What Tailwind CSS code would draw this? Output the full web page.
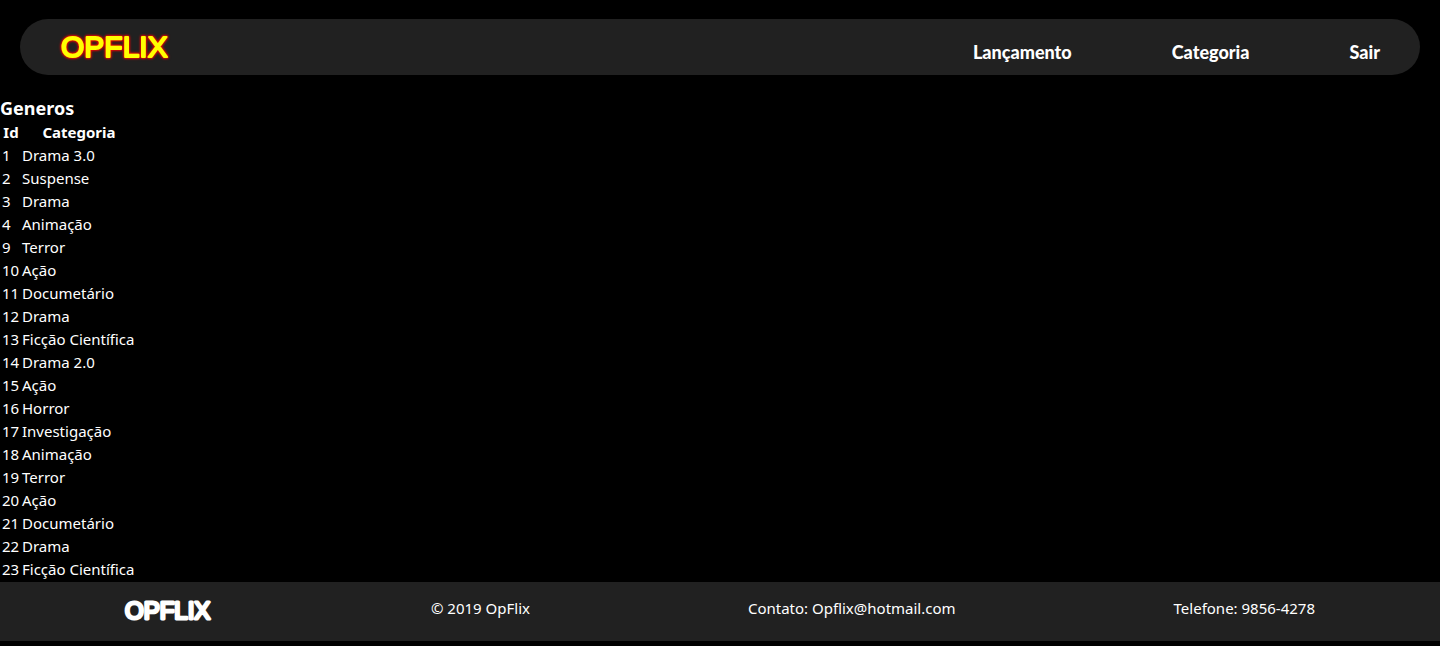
<!DOCTYPE html>
<html lang="pt-BR">
<head>
<meta charset="utf-8">
<meta name="viewport" content="width=device-width, initial-scale=1">
<title>OpFlix</title>
<script src="https://cdn.jsdelivr.net/npm/@tailwindcss/browser@4"></script>
</head>
<body class="bg-black text-white font-['Noto_Sans',sans-serif] text-[15px] leading-[21px]">
<header class="mx-5 mt-[19px] flex h-14 items-center justify-between rounded-full bg-[#212121] px-10">
  <a href="#" aria-label="OPFLIX">
    <svg class="h-8 w-[112px] overflow-visible [filter:drop-shadow(0_0_1px_#ff0000)_drop-shadow(0_0_1px_#ff0000)]" viewBox="0 0 112 32">
      <text x="1" y="26" font-family="Liberation Sans, sans-serif" font-size="30" fill="#ffff00" stroke="#ffff00" stroke-width="2" stroke-linejoin="round">OPFLIX</text>
    </svg>
  </a>
  <nav class="flex gap-[100px] pt-2.5 font-['Lato',sans-serif] text-lg leading-[21px] font-black">
    <a href="#">Lançamento</a>
    <a href="#">Categoria</a>
    <a href="#">Sair</a>
  </nav>
</header>
<main class="pt-[21px]">
  <h1 class="text-lg leading-6 font-bold">Generos</h1>
  <table class="border-separate border-spacing-[2px]">
    <thead>
      <tr><th class="w-[18px] p-0 text-center">Id</th><th class="w-[114px] p-0 text-center">Categoria</th></tr>
    </thead>
    <tbody>
      <tr><td class="p-0">1</td><td class="p-0">Drama 3.0</td></tr>
      <tr><td class="p-0">2</td><td class="p-0">Suspense</td></tr>
      <tr><td class="p-0">3</td><td class="p-0">Drama</td></tr>
      <tr><td class="p-0">4</td><td class="p-0">Animação</td></tr>
      <tr><td class="p-0">9</td><td class="p-0">Terror</td></tr>
      <tr><td class="p-0">10</td><td class="p-0">Ação</td></tr>
      <tr><td class="p-0">11</td><td class="p-0">Documetário</td></tr>
      <tr><td class="p-0">12</td><td class="p-0">Drama</td></tr>
      <tr><td class="p-0">13</td><td class="p-0">Ficção Científica</td></tr>
      <tr><td class="p-0">14</td><td class="p-0">Drama 2.0</td></tr>
      <tr><td class="p-0">15</td><td class="p-0">Ação</td></tr>
      <tr><td class="p-0">16</td><td class="p-0">Horror</td></tr>
      <tr><td class="p-0">17</td><td class="p-0">Investigação</td></tr>
      <tr><td class="p-0">18</td><td class="p-0">Animação</td></tr>
      <tr><td class="p-0">19</td><td class="p-0">Terror</td></tr>
      <tr><td class="p-0">20</td><td class="p-0">Ação</td></tr>
      <tr><td class="p-0">21</td><td class="p-0">Documetário</td></tr>
      <tr><td class="p-0">22</td><td class="p-0">Drama</td></tr>
      <tr><td class="p-0">23</td><td class="p-0">Ficção Científica</td></tr>
    </tbody>
  </table>
</main>
<footer class="flex items-start justify-around bg-[#212121] px-4 pt-4 pb-[18px]">
  <svg class="h-[25px] w-[88px] overflow-visible" viewBox="0 0 88 25" role="img" aria-label="OPFLIX">
    <text x="0" y="21" font-family="Liberation Sans, sans-serif" font-size="24" fill="#ffffff" stroke="#ffffff" stroke-width="3" stroke-linejoin="round">OPFLIX</text>
  </svg>
  <p>© 2019 OpFlix</p>
  <p>Contato: Opflix@hotmail.com</p>
  <p>Telefone: 9856-4278</p>
</footer>
</body>
</html>
